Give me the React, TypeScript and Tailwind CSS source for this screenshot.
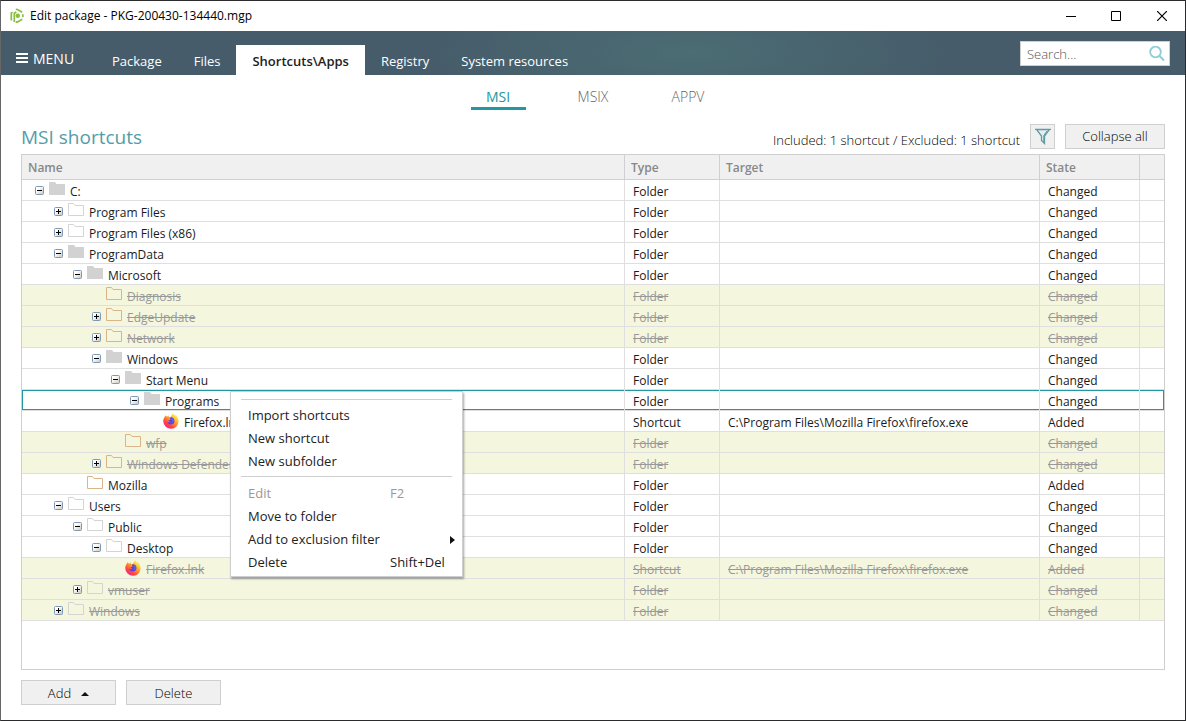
import React from 'react';
import clsx from 'clsx';

type Icon = 'filled' | 'gray' | 'tan' | 'firefox';

interface Row {
  name: string;
  depth: number;
  icon: Icon;
  toggle?: 'open' | 'closed';
  type?: string;
  target?: string;
  state?: string;
  excluded?: boolean;
  selected?: boolean;
}

const FIREFOX_PATH = 'C:\\Program Files\\Mozilla Firefox\\firefox.exe';

const rows: Row[] = [
  { name: 'C:', depth: 0, icon: 'filled', toggle: 'open' },
  { name: 'Program Files', depth: 1, icon: 'gray', toggle: 'closed' },
  { name: 'Program Files (x86)', depth: 1, icon: 'gray', toggle: 'closed' },
  { name: 'ProgramData', depth: 1, icon: 'filled', toggle: 'open' },
  { name: 'Microsoft', depth: 2, icon: 'filled', toggle: 'open' },
  { name: 'Diagnosis', depth: 3, icon: 'tan', excluded: true },
  { name: 'EdgeUpdate', depth: 3, icon: 'tan', toggle: 'closed', excluded: true },
  { name: 'Network', depth: 3, icon: 'tan', toggle: 'closed', excluded: true },
  { name: 'Windows', depth: 3, icon: 'filled', toggle: 'open' },
  { name: 'Start Menu', depth: 4, icon: 'filled', toggle: 'open' },
  { name: 'Programs', depth: 5, icon: 'filled', toggle: 'open', selected: true },
  { name: 'Firefox.lnk', depth: 6, icon: 'firefox', type: 'Shortcut', target: FIREFOX_PATH, state: 'Added' },
  { name: 'wfp', depth: 4, icon: 'tan', excluded: true },
  { name: 'Windows Defender', depth: 3, icon: 'tan', toggle: 'closed', excluded: true },
  { name: 'Mozilla', depth: 2, icon: 'tan', state: 'Added' },
  { name: 'Users', depth: 1, icon: 'gray', toggle: 'open' },
  { name: 'Public', depth: 2, icon: 'gray', toggle: 'open' },
  { name: 'Desktop', depth: 3, icon: 'gray', toggle: 'open' },
  { name: 'Firefox.lnk', depth: 4, icon: 'firefox', type: 'Shortcut', target: FIREFOX_PATH, state: 'Added', excluded: true },
  { name: 'vmuser', depth: 2, icon: 'gray', toggle: 'closed', excluded: true },
  { name: 'Windows', depth: 1, icon: 'gray', toggle: 'closed', excluded: true },
];

const FirefoxIcon = () => (
  <svg width="16" height="16" viewBox="0 0 16 16" className="shrink-0" aria-hidden="true">
    <defs>
      <linearGradient id="ff-body" x1="0.85" y1="0.1" x2="0.2" y2="0.95">
        <stop offset="0.1" stopColor="#ffe34a" />
        <stop offset="0.45" stopColor="#ff9427" />
        <stop offset="0.75" stopColor="#ff4242" />
        <stop offset="1" stopColor="#f0249a" />
      </linearGradient>
    </defs>
    <path
      d="M9.8.3c1 .7 1.5 1.5 1.8 2.3.4-.1.6-.4.6-.7 1.8 1.2 3.4 3.400 3.400 6.100A7.600 7.500 0 0 1 .3 8.600C.2 6.600.8 4.900 1.800 3.700l.3-1.500c.4.3.7.7 1 1.200.5-.1 1-.1 1.500.1l1.300-1.200-.2 1.500c.6.2 1.400.3 1.900.2C8.100 2.600 9.200 1.800 9.800.3z"
      fill="url(#ff-body)"
    />
    <path d="M7.500 4.200c2.200-.3 4 1.400 4 3.700 0 2.200-1.600 3.600-3.700 3.600-1.900 0-3.300-1.100-3.700-2.700 1.200.7 2.400.3 3.100-.5-.9 0-1.600-.5-1.900-1.100.9.1 1.700-.2 2.200-.8-.5-.4-.7-1.300 0-2.200z" fill="#6b3fd6" />
    <path d="M8.500 4.800c1.700.4 2.500 1.700 2.300 3.300-.2 1.200-1.200 1.900-2.300 1.900.9-.6 1.200-1.600.8-2.700-.3-.8-1.100-1.300-.8-2.500z" fill="#4a6cf0" />
  </svg>
);

const FolderIcon = ({ kind }: { kind: Icon }) => {
  if (kind === 'firefox') return <FirefoxIcon />;
  if (kind === 'filled') {
    return (
      <svg width="16" height="13" viewBox="0 0 16 13" className="mb-1 shrink-0" aria-hidden="true">
        <path d="M0 0h6l1.500 2H16v11H0z" fill="#d2d2d2" />
      </svg>
    );
  }
  return (
    <svg width="16" height="13" viewBox="0 0 16 13" className="mb-1 shrink-0" aria-hidden="true">
      <path d="M.5.5h5L7 2.500h8.500v10H.5z" fill="none" stroke={kind === 'tan' ? '#dbb588' : '#d4d4d4'} />
    </svg>
  );
};

const Toggle = ({ state, name }: { state?: 'open' | 'closed'; name: string }) => {
  if (!state) return <span className="w-[9px] shrink-0" />;
  return (
    <button type="button" className="shrink-0" aria-label={name} aria-expanded={state === 'open'}>
      <svg width="9" height="9" viewBox="0 0 9 9" className="block">
        <defs>
          <linearGradient id="toggle-fill" x1="0" y1="0" x2="1" y2="1">
            <stop offset="0.3" stopColor="#fff" />
            <stop offset="1" stopColor="#cbc6b8" />
          </linearGradient>
        </defs>
        <rect x=".5" y=".5" width="8" height="8" rx="1" fill="url(#toggle-fill)" stroke="#7e98b5" />
        <path d={state === 'open' ? 'M2 4.500h5' : 'M2 4.500h5M4.500 2v5'} stroke="#000" />
      </svg>
    </button>
  );
};

const TitleBar = () => (
  <div className="flex h-[30px] shrink-0 items-center bg-white pl-2">
    <svg width="16" height="16" viewBox="0 0 16 16" className="mr-[5px] shrink-0" aria-hidden="true">
      <g fill="none" stroke="#8bbd40" strokeWidth="1.700">
        <path d="M2.300 12.500V5.200l1.200-1" />
        <path d="M5.300 14V5.200l2-1.200" />
        <path d="M6.800 1.500 8 1.300l5.300 3" />
        <path d="M13.800 6.200v3" />
        <path d="m13.300 11.300-5.300 3-1.300-.6" />
      </g>
      <circle cx="8.800" cy="7.800" r="2.200" fill="#8bbd40" />
    </svg>
    <span className="flex-1 text-xs text-black">Edit package - PKG-200430-134440.mgp</span>
    <button type="button" aria-label="Minimize" className="flex h-full w-[45px] items-center justify-center">
      <svg width="10" height="10" viewBox="0 0 10 10"><path d="M0 5.500h10" stroke="#000" /></svg>
    </button>
    <button type="button" aria-label="Maximize" className="flex h-full w-[46px] items-center justify-center">
      <svg width="10" height="10" viewBox="0 0 10 10"><path d="M.5.5h9v9h-9z" fill="none" stroke="#000" /></svg>
    </button>
    <button type="button" aria-label="Close" className="flex h-full w-[46px] items-center justify-center">
      <svg width="10" height="10" viewBox="0 0 10 10"><path d="M0 0l10 10M10 0 0 10" stroke="#000" strokeWidth="1.200" /></svg>
    </button>
  </div>
);

const tabs = ['Package', 'Files', 'Shortcuts\\Apps', 'Registry', 'System resources'];

const Header = () => (
  <header className="flex h-11 shrink-0 items-end bg-[#465c6a] bg-[radial-gradient(ellipse_260px_70px_at_690px_22px,#4b6d74,transparent)] pr-[15px]">
    <button type="button" className="flex h-[30px] w-[95px] items-center gap-[5px] pl-[15px] text-sm text-white">
      <svg width="12" height="10" viewBox="0 0 12 10" className="mb-1" aria-hidden="true">
        <path d="M0 1h12M0 5h12M0 9h12" stroke="#fff" strokeWidth="2" />
      </svg>
      <span className="pb-0.5">MENU</span>
    </button>
    <nav className="flex flex-1">
      {tabs.map((tab) => (
        <button
          key={tab}
          type="button"
          className={clsx(
            'h-[30px] px-4 pt-1 text-[13px]',
            tab === 'Shortcuts\\Apps' ? 'bg-white font-semibold text-[#222]' : 'text-white',
          )}
        >
          {tab}
        </button>
      ))}
    </nav>
    <label className="mb-[9px] flex h-[25px] w-[150px] items-center border border-[#cfcfcf] bg-white pr-1 pl-1.5">
      <input type="text" aria-label="Search" placeholder="Search..." className="w-full min-w-0 pt-0.5 text-[13px] font-light outline-none placeholder:text-[#555]" />
      <svg width="16" height="16" viewBox="0 0 16 16" className="shrink-0" aria-hidden="true">
        <circle cx="6.500" cy="6" r="5.300" fill="none" stroke="#8fcdd6" strokeWidth="1.800" />
        <path d="m10.300 9.800 4.700 4.700" stroke="#8fcdd6" strokeWidth="2" />
      </svg>
    </label>
  </header>
);

const SubTabs = () => (
  <nav className="flex h-[35px] shrink-0 justify-center gap-10 text-sm font-light text-[#666]">
    <button type="button" className="w-[55px] border-b-[3px] border-[#2298a2] pt-3 font-normal text-[#2298a2]">MSI</button>
    <button type="button" className="w-[55px] pt-3 pb-[3px]">MSIX</button>
    <button type="button" className="w-[55px] pt-3 pb-[3px]">APPV</button>
  </nav>
);

const MenuItem = ({ label, shortcut, disabled, submenu }: { label: string; shortcut?: string; disabled?: boolean; submenu?: boolean }) => (
  <button type="button" role="menuitem" disabled={disabled} className={clsx('flex h-[23px] w-full items-center pt-px pl-[7px]', disabled && 'text-[#999]')}>
    <span className="flex-1 text-left whitespace-nowrap">{label}</span>
    {shortcut && <span className="w-[62px] text-left whitespace-nowrap">{shortcut}</span>}
    {submenu && (
      <svg width="5" height="8" viewBox="0 0 5 8" className="-mr-[3px]" aria-hidden="true"><path d="M0 0l5 4-5 4z" fill="#111" /></svg>
    )}
  </button>
);

const ContextMenu = () => (
  <div role="menu" className="absolute top-[236px] left-[208px] w-[233px] border border-[#cfcfcf] bg-white px-2.5 pt-[7px] pb-0.5 text-[13px] text-[#222] shadow-[1px_2px_2px_rgba(0,0,0,0.35)]">
    <hr className="mb-1 border-[#cfcfcf]" />
    <MenuItem label="Import shortcuts" />
    <MenuItem label="New shortcut" />
    <MenuItem label="New subfolder" />
    <hr className="mt-[3px] mb-[5px] border-[#cfcfcf]" />
    <MenuItem label="Edit" shortcut="F2" disabled />
    <MenuItem label="Move to folder" />
    <MenuItem label="Add to exclusion filter" submenu />
    <MenuItem label="Delete" shortcut="Shift+Del" />
  </div>
);

const headCell = 'border-r border-b border-[#d0d0d0] bg-[#f0f0f0] pt-0.5 pl-1.5 text-left font-semibold text-[#888]';

const ShortcutTable = () => (
  <table className="w-full table-fixed border-separate border-spacing-0 text-xs whitespace-nowrap">
    <colgroup>
      <col />
      <col className="w-[95px]" />
      <col className="w-[320px]" />
      <col className="w-[100px]" />
      <col className="w-[24px]" />
    </colgroup>
    <thead>
      <tr className="h-[25px]">
        <th className={headCell}>Name</th>
        <th className={headCell}>Type</th>
        <th className={headCell}>Target</th>
        <th className={headCell}>State</th>
        <th className="border-b border-[#d0d0d0] bg-[#f0f0f0]" aria-label="Spacer" />
      </tr>
    </thead>
    <tbody>
      {rows.map((row, i) => {
        const edge = row.selected && 'shadow-[inset_0_1px_#2298a2,inset_0_-1px_#2298a2]';
        const text = row.excluded && 'line-through';
        const cell = clsx('border-r border-b border-[#dfdfdf] py-0 pt-1 pl-2 leading-4', edge);
        return (
          <tr key={i} className={row.excluded ? 'bg-[#f4f6de] text-[#999]' : 'text-[#1a1a1a]'}>
            <td
              className={clsx(
                'border-r border-b border-[#dfdfdf] p-0',
                row.selected && 'shadow-[inset_1px_1px_#2298a2,inset_0_-1px_#2298a2]',
              )}
            >
              {/* one 19px step per tree level */}
              <div className="flex h-5 items-center" style={{ paddingLeft: 13 + row.depth * 19 }}>
                <Toggle state={row.toggle} name={row.name} />
                <span className="mr-[5px] ml-[5px] flex">
                  <FolderIcon kind={row.icon} />
                </span>
                <span className={clsx('pt-1 leading-4', text)}>{row.name}</span>
              </div>
            </td>
            <td className={cell}><span className={clsx(text)}>{row.type ?? 'Folder'}</span></td>
            <td className={cell}><span className={clsx(text)}>{row.target}</span></td>
            <td className={cell}><span className={clsx(text)}>{row.state ?? 'Changed'}</span></td>
            <td className={clsx('border-b border-[#dfdfdf]', row.selected && 'shadow-[inset_-1px_1px_#2298a2,inset_0_-1px_#2298a2]')} />
          </tr>
        );
      })}
    </tbody>
  </table>
);

const plainButton = 'flex h-[25px] items-center justify-center border border-[#cfcfcf] bg-[#f0f0f0] text-[13px] font-light text-black';

export default function App() {
  return (
    <div className="flex min-h-screen flex-col border border-[#2b2a2d] border-l-[#666] bg-white font-['Open_Sans','Noto_Sans',sans-serif]">
      <TitleBar />
      <Header />
      <SubTabs />
      <main className="flex flex-1 flex-col px-5 pb-[15px]">
        <div className="flex h-11 items-center">
          <h1 className="flex-1 pt-2.5 text-[19px] text-[#559ca8]">MSI shortcuts</h1>
          <span className="mr-2.5 pt-[18px] text-[13px] font-light text-black">Included: 1 shortcut / Excluded: 1 shortcut</span>
          <button type="button" aria-label="Filter" className={clsx(plainButton, 'mt-2 mr-2.5 w-[25px]')}>
            <svg width="16" height="17" viewBox="0 0 16 17" aria-hidden="true">
              <path d="M1.500 1.500h13L9.500 8v7.500l-3-3V8z" fill="#e3eeee" stroke="#5e9aa2" strokeWidth="1.300" />
              <path d="M12 3 8.800 7.500V14" fill="none" stroke="#5e9aa2" />
              <path d="M0 1.500h16" stroke="#5e9aa2" />
            </svg>
          </button>
          <button type="button" className={clsx(plainButton, 'mt-2 w-[100px] pt-0.5')}>Collapse all</button>
        </div>
        <section className="relative flex-1 border border-[#cfcfcf]">
          <ShortcutTable />
          <ContextMenu />
        </section>
        <footer className="mt-2.5 flex gap-2.5">
          <button type="button" className={clsx(plainButton, 'w-[95px] gap-2.5 pt-0.5')}>
            Add
            <svg width="8" height="4" viewBox="0 0 8 4" aria-hidden="true"><path d="M4 0l4 4H0z" fill="#111" /></svg>
          </button>
          <button type="button" className={clsx(plainButton, 'w-[95px] pt-0.5')}>Delete</button>
        </footer>
      </main>
    </div>
  );
}
